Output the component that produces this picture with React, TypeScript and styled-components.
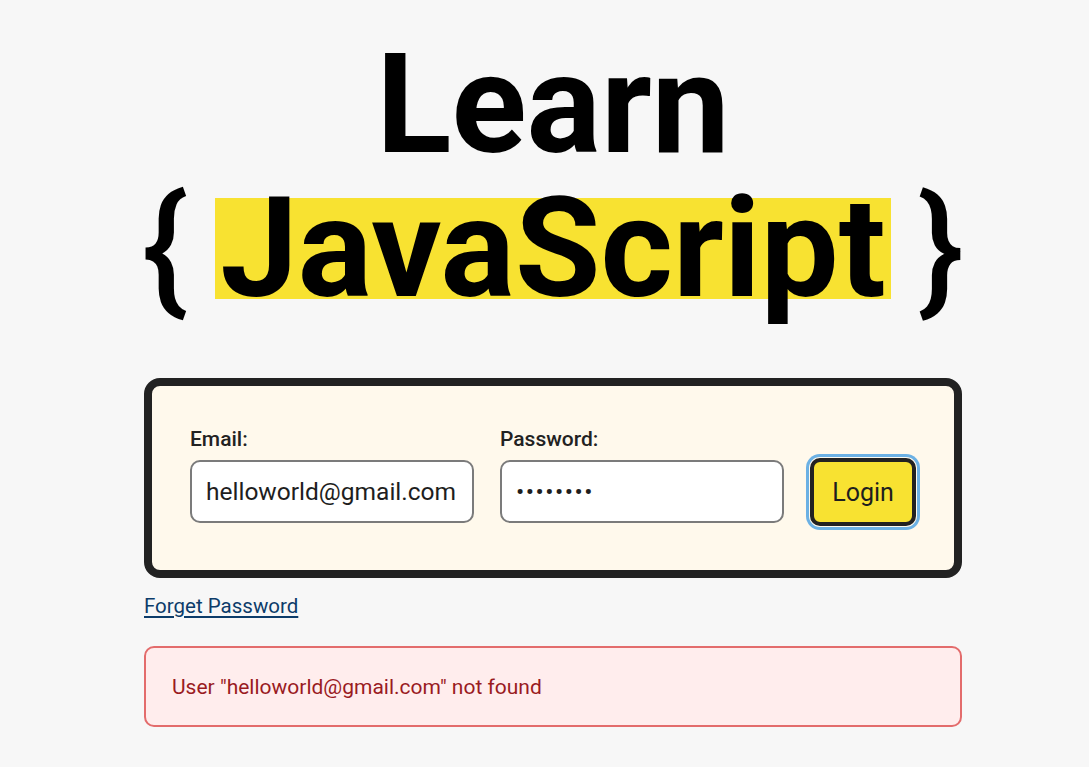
import React from 'react'
import styled, { createGlobalStyle } from 'styled-components'

const GlobalStyle = createGlobalStyle`
  body {
    margin: 0;
    background: #f7f7f7;
    font-family: Roboto, 'Noto Sans', sans-serif;
    color: #1e1e1e;
  }
`

const Page = styled.main`
  width: 818px;
  margin: 0 0 0 144px;
  padding-top: 54px;
`

const Title = styled.h1`
  display: flex;
  flex-direction: column;
  gap: 43px;
  margin: 0 0 79px;
  font-family: Roboto, sans-serif;
  font-size: 139px;
  font-weight: 700;
  color: #000;
  line-height: 101px;
`

const TitleLine = styled.div`
  display: flex;
  justify-content: center;
  align-items: center;
`

const Brace = styled.span`
  font-weight: 500;
`

const Highlight = styled.span`
  background: #f8e231;
  padding: 0 5px;
  margin: 0 27px;
`

const Card = styled.form`
  border: 8px solid #222222;
  border-radius: 16px;
  background: #fff9ec;
  padding: 42px 38px 47px;
`

const Fields = styled.div`
  display: flex;
  align-items: flex-end;
  gap: 26px;
`

const Field = styled.label`
  display: flex;
  flex-direction: column;
  gap: 9px;
`

const LabelText = styled.span`
  font-size: 21px;
  font-weight: 500;
  line-height: 23px;
  color: #222;
`

const Input = styled.input<{ $secret?: boolean }>`
  box-sizing: border-box;
  width: 284px;
  height: 63px;
  border: 2px solid #7b7b7b;
  border-radius: 10px;
  background: #fff;
  padding: 0 14px;
  font-family: inherit;
  font-size: 24.5px;
  letter-spacing: ${p => (p.$secret ? '1.5px' : 'normal')};
  color: #1e1e1e;
  outline: none;
`

const LoginButton = styled.button`
  box-sizing: border-box;
  width: 106px;
  height: 68px;
  margin-bottom: -3px;
  border: 4px solid #222;
  border-radius: 10px;
  background: #f8e231;
  box-shadow: 0 0 0 1px #fff9ec, 0 0 0 4px #6cb1e4;
  font-family: inherit;
  font-size: 25px;
  color: #1e1e1e;
  cursor: pointer;
`

const ForgotLink = styled.a`
  display: inline-block;
  margin-top: 15px;
  font-size: 20.5px;
  line-height: 26px;
  color: #0c3c6a;
  text-decoration: underline;
  text-decoration-thickness: 2px;
  text-underline-offset: 3px;
`

const ErrorBox = styled.div`
  margin-top: 27px;
  height: 81px;
  box-sizing: border-box;
  display: flex;
  align-items: center;
  padding: 0 26px;
  border: 2px solid #e36c6c;
  border-radius: 10px;
  background: #ffeded;
  color: #9a1b1f;
  font-size: 21px;
`

export default function App() {
  return (
    <>
      <GlobalStyle />
      <Page>
        <Title>
          <TitleLine>Learn</TitleLine>
          <TitleLine>
            <Brace>{'{'}</Brace>
            <Highlight>JavaScript</Highlight>
            <Brace>{'}'}</Brace>
          </TitleLine>
        </Title>
        <Card onSubmit={e => e.preventDefault()}>
          <Fields>
            <Field>
              <LabelText>Email:</LabelText>
              <Input type="email" defaultValue="helloworld@gmail.com" />
            </Field>
            <Field>
              <LabelText>Password:</LabelText>
              <Input type="password" $secret defaultValue="12345678" />
            </Field>
            <LoginButton type="submit">Login</LoginButton>
          </Fields>
        </Card>
        <ForgotLink href="#">Forget Password</ForgotLink>
        <ErrorBox>User "helloworld@gmail.com" not found</ErrorBox>
      </Page>
    </>
  )
}
